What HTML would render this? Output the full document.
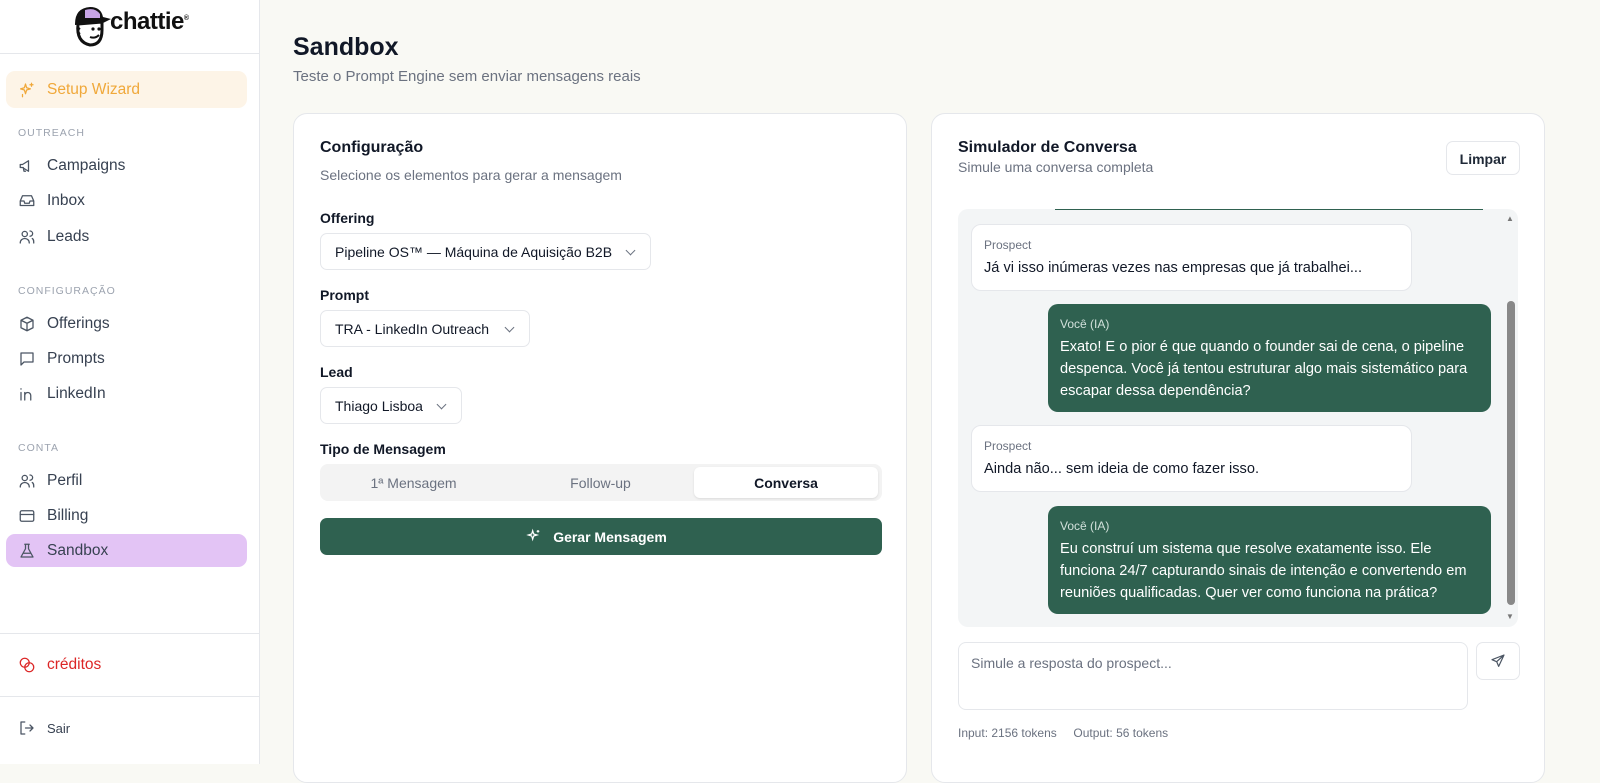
<!DOCTYPE html>
<html><head><meta charset="utf-8"><style>
*{box-sizing:border-box;margin:0;padding:0}
body{width:1600px;height:764px;overflow:hidden;background:#f9f9f4;font-family:"Liberation Sans",sans-serif;color:#1f2937;position:relative}
.abs{position:absolute}
.sb{position:absolute;left:0;top:0;width:260px;height:764px;background:#fff;border-right:1px solid #e5e7eb}
.nav{position:absolute;left:18px;font-size:15.5px;color:#374151;display:flex;align-items:center;gap:11px;font-weight:500}
.nav svg{width:18px;height:18px;fill:none;stroke:#4b5563;stroke-width:1.7;stroke-linecap:round;stroke-linejoin:round}
.sec{position:absolute;left:18px;font-size:10.5px;letter-spacing:1px;color:#9ca3af}
.card{position:absolute;background:#fff;border:1px solid #e5e7eb;border-radius:14px}
.lbl{position:absolute;font-size:14px;font-weight:bold;color:#111827}
.sel{position:absolute;height:37px;border:1px solid #e5e7eb;border-radius:7px;font-size:14px;color:#111827;padding:10px 0 0 14px;background:#fff}
.sel:after{content:"";position:absolute;right:16px;top:13px;width:6px;height:6px;border-right:1.3px solid #6b7280;border-bottom:1.3px solid #6b7280;transform:rotate(45deg)}
.bub{position:absolute;border-radius:10px;font-size:14.6px;line-height:22px;padding:12px 12px}
.bub small{display:block;font-size:12px;line-height:16px;margin-bottom:4px}
.p{background:#fff;border:1px solid #e5e7eb;color:#111827;padding-right:20px}.p small{color:#6b7280}
.v{background:#2f6150;color:#fff}.v small{color:#d1e0da}
</style></head><body>
<div class="sb">
 <div class="abs" style="left:70px;top:4px;width:42px;height:44px">
  <svg width="42" height="44" viewBox="0 0 42 44"><path d="M8 20 Q6 38 20 41 Q32 41 32 26 L32 18Z" fill="#fff" stroke="#111" stroke-width="3"/><path d="M5 20 Q5 4 20 3 Q31 3 33 13 L41 15 L33 19 L5 21Z" fill="#111"/><path d="M15 6 Q25 3 30 10 L30 14 L15 14Z" fill="#c7a4e6"/><circle cx="23" cy="25" r="1.6" fill="#111"/><circle cx="29" cy="25" r="1.6" fill="#111"/><path d="M20 33 Q25 35 29 31" stroke="#111" stroke-width="2" fill="none"/><path d="M10 24 Q6 27 10 30" stroke="#111" stroke-width="2" fill="none"/></svg>
 </div>
 <div class="abs" style="left:110px;top:8px;font-size:24px;font-weight:bold;color:#111;letter-spacing:-0.5px">chattie<sup style="font-size:7px">®</sup></div>
 <div class="abs" style="left:0;top:53px;width:259px;border-top:1px solid #e5e7eb"></div>
 <div class="abs" style="left:6px;top:71px;width:241px;height:37px;background:#fdf4e7;border-radius:9px"></div>
 <div class="nav" style="top:81px;color:#f0a83a"><svg viewBox="0 0 24 24" style="stroke:#f0a83a"><path d="M10 4l1.5 5 5 1.5-5 1.5L10 17l-1.5-5-5-1.5 5-1.5z"/><path d="M18 3v4M16 5h4M6 18v3"/></svg>Setup Wizard</div>
 <div class="sec" style="top:127px">OUTREACH</div>
 <div class="nav" style="top:157px"><svg viewBox="0 0 24 24"><path d="M3 10v4h3l8 5V5L6 10z M7 14l1 5h2"/></svg>Campaigns</div>
 <div class="nav" style="top:192px"><svg viewBox="0 0 24 24"><path d="M3 12l3-7h12l3 7v6H3z M3 12h5l1 3h6l1-3h5"/></svg>Inbox</div>
 <div class="nav" style="top:228px"><svg viewBox="0 0 24 24"><circle cx="9" cy="8" r="3.5"/><path d="M3 20c0-4 3-6 6-6s6 2 6 6M16 4a3.5 3.5 0 010 7M19 14c2 1 2 3 2 6"/></svg>Leads</div>
 <div class="sec" style="top:285px">CONFIGURAÇÃO</div>
 <div class="nav" style="top:315px"><svg viewBox="0 0 24 24"><path d="M12 3l8 4v10l-8 4-8-4V7z M4 7l8 4 8-4 M12 11v10"/></svg>Offerings</div>
 <div class="nav" style="top:350px"><svg viewBox="0 0 24 24"><path d="M4 4h16v12H8l-4 4z"/></svg>Prompts</div>
 <div class="nav" style="top:385px"><svg viewBox="0 0 24 24"><path d="M4 10v10M4 5v.5M9 20V10M9 14a4 4 0 018 0v6M17 14v6"/></svg>LinkedIn</div>
 <div class="sec" style="top:442px">CONTA</div>
 <div class="nav" style="top:472px"><svg viewBox="0 0 24 24"><circle cx="9" cy="8" r="3.5"/><path d="M3 20c0-4 3-6 6-6s6 2 6 6M16 4a3.5 3.5 0 010 7M19 14c2 1 2 3 2 6"/></svg>Perfil</div>
 <div class="nav" style="top:507px"><svg viewBox="0 0 24 24"><rect x="3" y="5" width="18" height="14" rx="2"/><path d="M3 10h18"/></svg>Billing</div>
 <div class="abs" style="left:6px;top:534px;width:241px;height:33px;background:#e3c4f5;border-radius:9px"></div>
 <div class="nav" style="top:542px"><svg viewBox="0 0 24 24"><path d="M9 3h6M10 3v6L4 20h16L14 9V3M7 15h10"/></svg>Sandbox</div>
 <div class="abs" style="left:0;top:633px;width:259px;border-top:1px solid #e5e7eb"></div>
 <div class="nav" style="top:656px;color:#dc2626"><svg viewBox="0 0 24 24" style="stroke:#dc2626"><circle cx="9" cy="9" r="6"/><circle cx="15" cy="15" r="6"/></svg>créditos</div>
 <div class="abs" style="left:0;top:696px;width:259px;border-top:1px solid #e5e7eb"></div>
 <div class="nav" style="top:719px;font-size:13px"><svg viewBox="0 0 24 24"><path d="M9 4H4v16h5M10 12h10M16 8l4 4-4 4"/></svg>Sair</div>
</div>

<div class="abs" style="left:293px;top:33px;font-size:25px;font-weight:bold;color:#111827">Sandbox</div>
<div class="abs" style="left:293px;top:68px;font-size:15px;color:#6b7280">Teste o Prompt Engine sem enviar mensagens reais</div>

<div class="card" style="left:293px;top:113px;width:614px;height:670px">
 <div class="lbl" style="left:26px;top:25px;font-size:16px">Configuração</div>
 <div class="abs" style="left:26px;top:53px;font-size:14px;color:#6b7280">Selecione os elementos para gerar a mensagem</div>
 <div class="lbl" style="left:26px;top:96px">Offering</div>
 <div class="sel" style="left:26px;top:119px;width:331px">Pipeline OS™ — Máquina de Aquisição B2B</div>
 <div class="lbl" style="left:26px;top:173px">Prompt</div>
 <div class="sel" style="left:26px;top:196px;width:210px">TRA - LinkedIn Outreach</div>
 <div class="lbl" style="left:26px;top:250px">Lead</div>
 <div class="sel" style="left:26px;top:273px;width:142px">Thiago Lisboa</div>
 <div class="lbl" style="left:26px;top:327px">Tipo de Mensagem</div>
 <div class="abs" style="left:26px;top:350px;width:562px;height:37px;background:#f3f3f3;border-radius:8px;font-size:14px;color:#6b7280">
  <div class="abs" style="left:0;top:11px;width:187px;text-align:center">1ª Mensagem</div>
  <div class="abs" style="left:187px;top:11px;width:187px;text-align:center">Follow-up</div>
  <div class="abs" style="left:374px;top:3px;width:184px;height:31px;background:#fff;border-radius:6px;box-shadow:0 1px 2px rgba(0,0,0,.1);text-align:center;padding-top:8px;color:#111827;font-weight:bold">Conversa</div>
 </div>
 <div class="abs" style="left:26px;top:404px;width:562px;height:37px;background:#2f6150;border-radius:7px;color:#fff;font-size:14px;font-weight:bold;text-align:center;padding-top:11px">
  <svg width="16" height="16" viewBox="0 0 24 24" style="position:absolute;left:206px;top:10px;fill:none;stroke:#fff;stroke-width:1.8"><path d="M10 4l1.5 5 5 1.5-5 1.5L10 17l-1.5-5-5-1.5 5-1.5z"/><path d="M18 3v4M16 5h4"/></svg>
  <span style="margin-left:18px">Gerar Mensagem</span></div>
</div>

<div class="card" style="left:931px;top:113px;width:614px;height:670px">
 <div class="lbl" style="left:26px;top:25px;font-size:16px">Simulador de Conversa</div>
 <div class="abs" style="left:26px;top:45px;font-size:14px;color:#6b7280">Simule uma conversa completa</div>
 <div class="abs" style="left:514px;top:27px;width:74px;height:34px;border:1px solid #e5e7eb;border-radius:7px;font-size:14px;font-weight:bold;text-align:center;padding-top:9px">Limpar</div>
 <div class="abs" style="left:26px;top:95px;width:560px;height:418px;background:#f3f5f6;border-radius:10px;overflow:hidden">
  <div class="abs" style="left:97px;top:0;width:428px;border-top:1px solid #2f6150"></div>
  <div class="bub p" style="left:13px;top:15px;width:441px;height:67px"><small>Prospect</small>Já vi isso inúmeras vezes nas empresas que já trabalhei...</div>
  <div class="bub v" style="left:90px;top:95px;width:443px;height:108px"><small>Você (IA)</small>Exato! E o pior é que quando o founder sai de cena, o pipeline despenca. Você já tentou estruturar algo mais sistemático para escapar dessa dependência?</div>
  <div class="bub p" style="left:13px;top:216px;width:441px;height:67px"><small>Prospect</small>Ainda não... sem ideia de como fazer isso.</div>
  <div class="bub v" style="left:90px;top:297px;width:443px;height:108px"><small>Você (IA)</small>Eu construí um sistema que resolve exatamente isso. Ele funciona 24/7 capturando sinais de intenção e convertendo em reuniões qualificadas. Quer ver como funciona na prática?</div>
  <div class="abs" style="left:549px;top:92px;width:8px;height:304px;background:#888;border-radius:4px"></div>
  <div class="abs" style="left:548px;top:5px;font-size:8px;color:#777">▲</div>
  <div class="abs" style="left:548px;top:403px;font-size:8px;color:#777">▼</div>
 </div>
 <div class="abs" style="left:26px;top:528px;width:510px;height:68px;border:1px solid #e5e7eb;border-radius:8px;font-size:14px;color:#6b7280;padding:12px">Simule a resposta do prospect...</div>
 <div class="abs" style="left:544px;top:528px;width:44px;height:38px;border:1px solid #e5e7eb;border-radius:7px"><svg width="16" height="16" viewBox="0 0 24 24" style="margin:10px 13px;fill:none;stroke:#4b5563;stroke-width:1.8;stroke-linejoin:round"><path d="M21 3L3 10l7 3 3 7z M10 13l11-10"/></svg></div>
 <div class="abs" style="left:26px;top:612px;font-size:12px;color:#6b7280">Input: 2156 tokens &nbsp;&nbsp;&nbsp; Output: 56 tokens</div>
</div>
</body></html>
